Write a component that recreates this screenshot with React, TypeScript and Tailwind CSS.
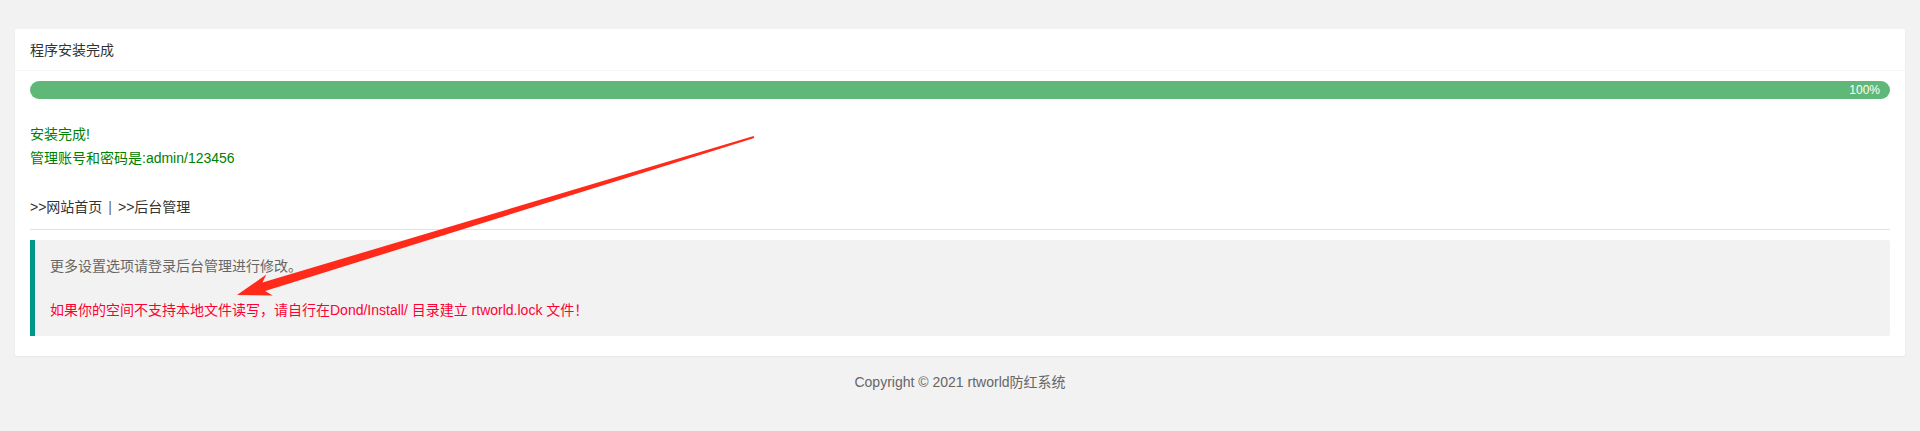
import React from "react";

export default function App() {
  return (
    <div
      className="relative min-h-[431px] bg-[#f2f2f2] text-[14px] text-[#666]"
      style={{ fontFamily: '"Liberation Sans", Arial, "Noto Sans CJK SC", sans-serif' }}
    >
      <div className="px-[15px] pt-[29px]">
        <div className="rounded-[2px] bg-white shadow-[0_1px_2px_0_rgba(0,0,0,0.05)]">
          <div className="h-[42px] border-b border-[#f6f6f6] px-[15px] leading-[42px] text-[#333]">
            程序安装完成
          </div>
          <div className="px-[15px] py-[10px] leading-[24px]">
            <div className="relative h-[18px] rounded-[20px] bg-[#5FB878]">
              <span className="absolute right-[10px] top-0 text-[12px] leading-[18px] text-white">100%</span>
            </div>
            <div className="mt-[23px] text-[#008000]">
              安装完成!
              <br />
              管理账号和密码是:admin/123456
            </div>
            <div className="mt-[25px] flex items-center text-[#333]">
              <a>&gt;&gt;网站首页</a>
              <span className="mx-[6px] text-[#666]">|</span>
              <a>&gt;&gt;后台管理</a>
            </div>
            <hr className="my-[10px] h-px border-0 bg-[#e2e2e2]" />
            <div className="mb-[10px] rounded-r-[2px] border-l-[5px] border-[#009688] bg-[#f2f2f2] p-[15px] leading-[22px]">
              <div className="text-[#666]">更多设置选项请登录后台管理进行修改。</div>
              <div className="h-[22px]" />
              <div className="text-[#ff0033]">
                如果你的空间不支持本地文件读写，请自行在Dond/Install/ 目录建立 rtworld.lock 文件！
              </div>
            </div>
          </div>
        </div>
      </div>
      <div className="mt-[16px] text-center leading-[20px] text-[#666]">Copyright © 2021 rtworld防红系统</div>

      <svg
        className="pointer-events-none absolute left-0 top-0"
        width="1920"
        height="431"
        viewBox="0 0 1920 431"
      >
        <polygon
          points="754.3,138 265.1,291.1 272.7,295.6 237,295 266.3,274.6 262.5,282.5 753.7,136"
          fill="#ff2a1a"
        />
      </svg>
    </div>
  );
}
